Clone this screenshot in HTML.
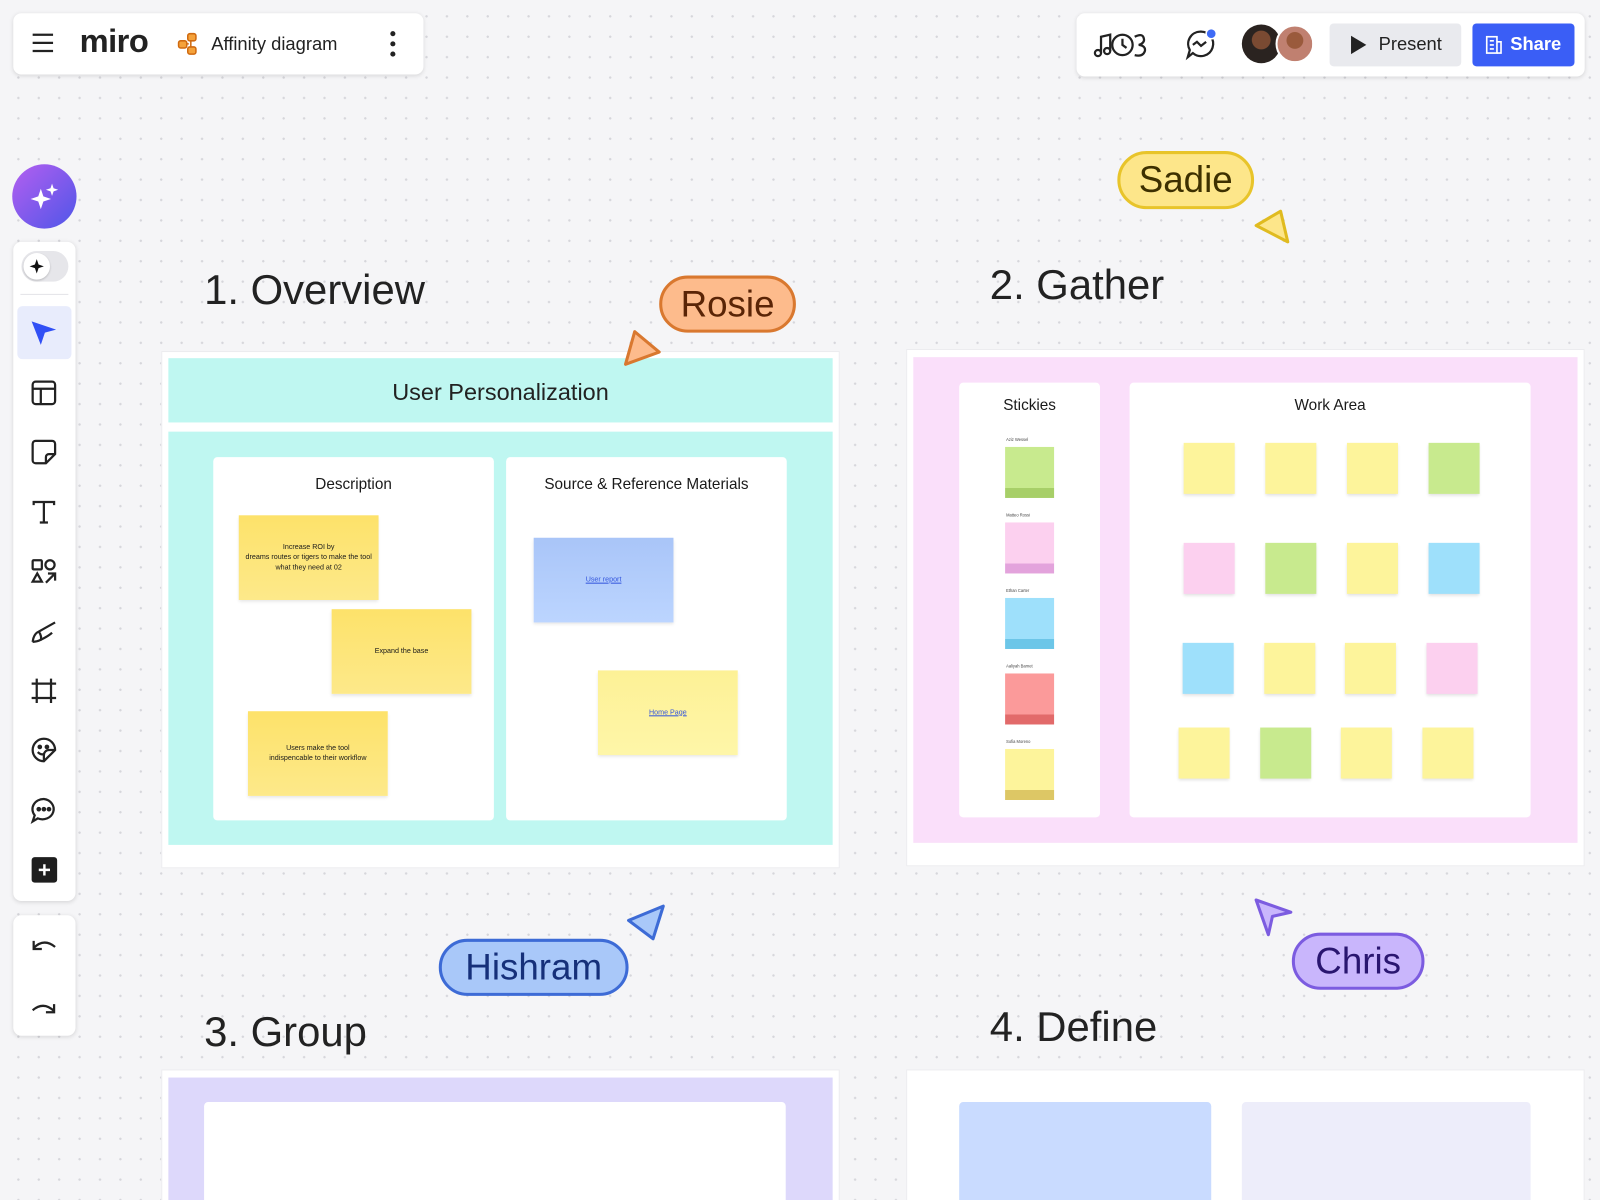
<!DOCTYPE html>
<html><head><meta charset="utf-8">
<style>
*{box-sizing:border-box;margin:0;padding:0}
html,body{width:1600px;height:1200px;overflow:hidden;background:#f5f5f7}
#w{position:absolute;left:0;top:0;width:1568px;height:1176px;transform:scale(1.020408);transform-origin:0 0;
background-color:#f5f5f7;background-image:radial-gradient(circle,#d6d6db 1px,transparent 1.3px);background-size:20px 20px;background-position:8px 6px;
font-family:"Liberation Sans","DejaVu Sans",sans-serif;color:#1a1a1a;overflow:hidden}
.a{position:absolute}
.panel{background:#fff;border-radius:8px;box-shadow:0 1px 4px rgba(0,0,0,.12)}
.t{font-size:41px;color:#222;font-family:"Liberation Sans",sans-serif;font-weight:normal}
.lab{position:absolute;border-radius:30px;border:3px solid;font-size:36px;text-align:center;font-family:"Liberation Sans",sans-serif}
.st{position:absolute;width:50px;height:50px;box-shadow:0 2px 3px rgba(0,0,0,.12)}
.Y{background:#fdf49b}.G{background:#c8ea8e}.P{background:#fcd0ef}.B{background:#9ee0fb}
.note{position:absolute;width:137px;height:83px;font-size:7px;text-align:center;display:flex;align-items:center;justify-content:center;line-height:10px;box-shadow:0 2px 3px rgba(0,0,0,.1)}
.ic{position:absolute;left:29px;width:28px;height:28px}
</style></head><body><div id="w">

<div class="a panel" style="left:13px;top:13px;width:402px;height:60px"></div>
<svg class="a" style="left:30px;top:31px" width="24" height="22"><path d="M2 3H22M2 11H22M2 19H22" stroke="#222" stroke-width="2.2"/></svg>
<div class="a" style="left:78px;top:22px;font-size:32px;font-weight:bold;letter-spacing:-0.5px;color:#222">miro</div>
<svg class="a" style="left:173px;top:31px" width="24" height="24"><rect x="11" y="2" width="8" height="7" rx="2" fill="#f5a23a" stroke="#d06a10" stroke-width="1.5"/><rect x="2" y="9" width="8" height="7" rx="2" fill="#f5a23a" stroke="#d06a10" stroke-width="1.5"/><rect x="11" y="15" width="8" height="7" rx="2" fill="#f5a23a" stroke="#d06a10" stroke-width="1.5"/><path d="M10 12H12M14 9V15" stroke="#d06a10" stroke-width="1.5"/></svg>
<div class="a" style="left:207px;top:33px;font-size:18px;color:#222">Affinity diagram</div>
<svg class="a" style="left:380px;top:30px" width="10" height="26"><circle cx="5" cy="3" r="2.5" fill="#222"/><circle cx="5" cy="13" r="2.5" fill="#222"/><circle cx="5" cy="23" r="2.5" fill="#222"/></svg>

<div class="a panel" style="left:1055px;top:13px;width:498px;height:62px"></div>
<svg class="a" style="left:1070px;top:28px" width="62" height="32" fill="none" stroke="#222" stroke-width="2.2"><circle cx="6" cy="24" r="3"/><circle cx="15" cy="22" r="3"/><path d="M9 24V8L18 6V22"/><circle cx="30" cy="16" r="10"/><path d="M30 10V16L34 19"/><path d="M42 8Q50 4 51 10Q52 14 46 16Q53 17 52 22Q50 28 42 26"/></svg>
<svg class="a" style="left:1160px;top:26px" width="34" height="34" fill="none" stroke="#222" stroke-width="2.2"><path d="M16 5A12 12 0 1 1 9 26L4 30L6 23A12 12 0 0 1 16 5Z"/><path d="M9 18L13 15L17 19L22 15"/><circle cx="27" cy="7" r="5" fill="#3f6bf6" stroke="#fff" stroke-width="1.5"/></svg>
<div class="a" style="left:1217px;top:24px;width:38px;height:38px;border-radius:50%;background:radial-gradient(circle at 50% 40%,#7a4a32 0 30%,#2a2320 32%)"></div>
<div class="a" style="left:1250px;top:24px;width:38px;height:38px;border-radius:50%;background:radial-gradient(circle at 50% 40%,#9a5a3c 0 30%,#c08070 32%);border:2px solid #fff"></div>
<div class="a" style="left:1303px;top:23px;width:129px;height:42px;border-radius:4px;background:#e9eaee"></div>
<svg class="a" style="left:1322px;top:34px" width="18" height="20"><path d="M2 1L17 10L2 19Z" fill="#222"/></svg>
<div class="a" style="left:1351px;top:33px;font-size:18px;color:#222">Present</div>
<div class="a" style="left:1443px;top:23px;width:100px;height:42px;border-radius:4px;background:#3a5ef6"></div>
<svg class="a" style="left:1455px;top:34px" width="18" height="20" fill="none" stroke="#fff" stroke-width="1.6"><rect x="2" y="2" width="10" height="16"/><path d="M12 7H16V18H12M5 6H9M5 10H9M5 14H9"/></svg>
<div class="a" style="left:1480px;top:33px;font-size:18px;color:#fff;font-weight:bold">Share</div>

<div class="a" style="left:12px;top:161px;width:63px;height:63px;border-radius:50%;background:linear-gradient(135deg,#b45ff0,#4f56e8)"></div>
<svg class="a" style="left:28px;top:177px" width="32" height="32" fill="#fff"><path d="M12 8L14.5 15.5L22 18L14.5 20.5L12 28L9.5 20.5L2 18L9.5 15.5Z"/><path d="M23 3L24.5 7.5L29 9L24.5 10.5L23 15L21.5 10.5L17 9L21.5 7.5Z"/></svg>
<div class="a panel" style="left:13px;top:237px;width:61px;height:646px"></div>
<div class="a" style="left:21px;top:246px;width:46px;height:30px;border-radius:15px;background:#e6e6ea"></div>
<div class="a" style="left:23px;top:248px;width:26px;height:26px;border-radius:50%;background:#fff;box-shadow:0 1px 2px rgba(0,0,0,.2)"></div>
<svg class="a" style="left:28px;top:253px" width="16" height="16"><path d="M8 1L9.8 6.2L15 8L9.8 9.8L8 15L6.2 9.8L1 8L6.2 6.2Z" fill="#111"/></svg>
<div class="a" style="left:20px;top:288px;width:47px;height:1px;background:#e4e4e8"></div>
<div class="a" style="left:17px;top:300px;width:53px;height:52px;border-radius:5px;background:#e8ecfc"></div>
<svg class="ic" style="top:312px" viewBox="0 0 28 28"><path d="M2 3L26 11L15 14L11 26Z" fill="#3150f5"/></svg>
<svg class="ic" style="top:371px" viewBox="0 0 28 28" fill="none" stroke="#222" stroke-width="2.2"><rect x="3" y="3" width="22" height="22" rx="3"/><path d="M3 10H25M11 10V25"/></svg>
<svg class="ic" style="top:429px" viewBox="0 0 28 28" fill="none" stroke="#222" stroke-width="2.2"><path d="M6 3H22A3 3 0 0 1 25 6V16L16 25H6A3 3 0 0 1 3 22V6A3 3 0 0 1 6 3Z"/><path d="M25 16H19A3 3 0 0 0 16 19V25"/></svg>
<svg class="ic" style="top:488px" viewBox="0 0 28 28" fill="none" stroke="#222" stroke-width="2.2"><path d="M4 7V4H24V7M14 4V24M10 24H18"/></svg>
<svg class="ic" style="top:546px" viewBox="0 0 28 28" fill="none" stroke="#222" stroke-width="2.2"><rect x="3" y="3" width="9" height="9" rx="1"/><circle cx="20" cy="7.5" r="4.5"/><path d="M7.5 16L12 24H3Z"/><path d="M16 25L25 16M18 16H25V23"/></svg>
<svg class="ic" style="top:604px" viewBox="0 0 28 28" fill="none" stroke="#222" stroke-width="2.2"><path d="M3 25Q4 17 9 15Q16 11 25 6"/><path d="M9 15Q12 19 11 23Q7 25 3 25"/><path d="M11 23Q19 19 22 16"/></svg>
<svg class="ic" style="top:663px" viewBox="0 0 28 28" fill="none" stroke="#222" stroke-width="2.2"><path d="M7 2V26M21 2V26M2 7H26M2 21H26"/></svg>
<svg class="ic" style="top:721px" viewBox="0 0 28 28" fill="none" stroke="#222" stroke-width="2.2"><path d="M25 14A11 11 0 1 0 14 25L25 14Z"/><path d="M25 14H19A5 5 0 0 0 14 19V25"/><circle cx="10" cy="11" r="1.2" fill="#222"/><circle cx="17" cy="11" r="1.2" fill="#222"/><path d="M8 16Q11 19 14 18"/></svg>
<svg class="ic" style="top:780px" viewBox="0 0 28 28" fill="none" stroke="#222" stroke-width="2.2"><path d="M14 3A11 10 0 1 1 8 22L3 25L5 19A11 10 0 0 1 14 3Z"/><circle cx="9" cy="13" r="1.2" fill="#222"/><circle cx="14" cy="13" r="1.2" fill="#222"/><circle cx="19" cy="13" r="1.2" fill="#222"/></svg>
<div class="a" style="left:31px;top:840px;width:25px;height:25px;border-radius:3px;background:#1e1e1e"></div>
<svg class="a" style="left:37px;top:846px" width="13" height="13"><path d="M6.5 1V12M1 6.5H12" stroke="#fff" stroke-width="2.4"/></svg>
<div class="a panel" style="left:13px;top:897px;width:61px;height:118px"></div>
<svg class="ic" style="top:913px" viewBox="0 0 28 28" fill="none" stroke="#222" stroke-width="2.2"><path d="M4 9V17H12"/><path d="M4 16Q14 6 25 15"/></svg>
<svg class="ic" style="top:972px" viewBox="0 0 28 28" fill="none" stroke="#222" stroke-width="2.2"><path d="M24 12V20H16"/><path d="M24 19Q14 9 3 18"/></svg>

<div class="a t" style="left:200px;top:261px">1. Overview</div>
<div class="a t" style="left:970px;top:256px">2. Gather</div>
<div class="a t" style="left:200px;top:988px">3. Group</div>
<div class="a t" style="left:970px;top:983px">4. Define</div>

<div class="a" style="left:158px;top:344px;width:665px;height:507px;background:#fff;border:1px solid #ececef"></div>
<div class="a" style="left:165px;top:351px;width:651px;height:63px;background:#bff7f1;font-size:23px;text-align:center;line-height:66px;color:#222">User Personalization</div>
<div class="a" style="left:165px;top:423px;width:651px;height:405px;background:#bff7f1"></div>
<div class="a" style="left:209px;top:448px;width:275px;height:356px;background:#fff;border-radius:4px;font-size:15px;text-align:center;padding-top:18px">Description</div>
<div class="a" style="left:496px;top:448px;width:275px;height:356px;background:#fff;border-radius:4px;font-size:15px;text-align:center;padding-top:18px">Source &amp; Reference Materials</div>
<div class="note" style="left:234px;top:505px;background:linear-gradient(#fde26a,#fde98a)">Increase ROI by<br>dreams routes or tigers to make the tool<br>what they need at 02</div>
<div class="note" style="left:325px;top:597px;background:linear-gradient(#fde26a,#fde98a)">Expand the base</div>
<div class="note" style="left:243px;top:697px;background:linear-gradient(#fde26a,#fde98a)">Users make the tool<br>indispencable to their workflow</div>
<div class="note" style="left:523px;top:527px;background:linear-gradient(#a9c5f8,#bcd5ff);color:#3355dd;text-decoration:underline">User report</div>
<div class="note" style="left:586px;top:657px;background:linear-gradient(#fdf196,#fef6a8);color:#3355dd;text-decoration:underline">Home Page</div>

<div class="a" style="left:888px;top:342px;width:665px;height:507px;background:#fff;border:1px solid #ececef"></div>
<div class="a" style="left:895px;top:350px;width:651px;height:476px;background:#fadffa"></div>
<div class="a" style="left:940px;top:375px;width:138px;height:426px;background:#fff;border-radius:4px;font-size:15px;text-align:center;padding-top:14px">Stickies</div>
<div class="a" style="left:1107px;top:375px;width:393px;height:426px;background:#fff;border-radius:4px;font-size:15px;text-align:center;padding-top:14px">Work Area</div>
<div class="a" style="left:985px;top:438px;width:48px;height:50px;background:linear-gradient(#c8ea8e 80%,#a7cf68 80%)"></div>
<div class="a" style="left:985px;top:512px;width:48px;height:50px;background:linear-gradient(#fcd0ef 80%,#e3a3dc 80%)"></div>
<div class="a" style="left:985px;top:586px;width:48px;height:50px;background:linear-gradient(#9ee0fb 80%,#6cc6e8 80%)"></div>
<div class="a" style="left:985px;top:660px;width:48px;height:50px;background:linear-gradient(#fb9a9a 80%,#e26a6a 80%)"></div>
<div class="a" style="left:985px;top:734px;width:48px;height:50px;background:linear-gradient(#fdf49b 80%,#ddc765 80%)"></div>
<div class="a" style="left:986px;top:428px;font-size:4px;color:#444">Aziz Wessel</div>
<div class="a" style="left:986px;top:502px;font-size:4px;color:#444">Matteo Rossi</div>
<div class="a" style="left:986px;top:576px;font-size:4px;color:#444">Ethan Carter</div>
<div class="a" style="left:986px;top:650px;font-size:4px;color:#444">Aaliyah Barnet</div>
<div class="a" style="left:986px;top:724px;font-size:4px;color:#444">Sofia Moreno</div>

<div class="st Y" style="left:1160px;top:434px"></div><div class="st Y" style="left:1240px;top:434px"></div><div class="st Y" style="left:1320px;top:434px"></div><div class="st G" style="left:1400px;top:434px"></div>
<div class="st P" style="left:1160px;top:532px"></div><div class="st G" style="left:1240px;top:532px"></div><div class="st Y" style="left:1320px;top:532px"></div><div class="st B" style="left:1400px;top:532px"></div>
<div class="st B" style="left:1159px;top:630px"></div><div class="st Y" style="left:1239px;top:630px"></div><div class="st Y" style="left:1318px;top:630px"></div><div class="st P" style="left:1398px;top:630px"></div>
<div class="st Y" style="left:1155px;top:713px"></div><div class="st G" style="left:1235px;top:713px"></div><div class="st Y" style="left:1314px;top:713px"></div><div class="st Y" style="left:1394px;top:713px"></div>

<div class="a" style="left:158px;top:1048px;width:665px;height:140px;background:#fff;border:1px solid #ececef"></div>
<div class="a" style="left:165px;top:1056px;width:651px;height:130px;background:#ddd8fb"></div>
<div class="a" style="left:200px;top:1080px;width:570px;height:110px;background:#fff;border-radius:4px"></div>
<div class="a" style="left:888px;top:1048px;width:665px;height:140px;background:#fff;border:1px solid #ececef"></div>
<div class="a" style="left:940px;top:1080px;width:247px;height:110px;background:#c9dbff;border-radius:4px"></div>
<div class="a" style="left:1217px;top:1080px;width:283px;height:110px;background:#ededfa;border-radius:4px"></div>

<div class="lab" style="left:1095px;top:148px;width:134px;height:57px;background:#fde68a;border-color:#e8c42a;color:#3d3000;line-height:50px">Sadie</div>
<svg class="a" style="left:1228px;top:203px" width="40" height="36"><path d="M27 4L34 34L3 18Z" fill="#fde68a" stroke="#e0bb20" stroke-width="3" stroke-linejoin="round"/></svg>
<div class="lab" style="left:646px;top:270px;width:134px;height:56px;background:#fdbb8c;border-color:#d9782f;color:#5a2406;line-height:50px">Rosie</div>
<svg class="a" style="left:608px;top:320px" width="42" height="40"><path d="M14 5L38 25L5 37Z" fill="#fdbb8c" stroke="#d9782f" stroke-width="3" stroke-linejoin="round"/></svg>
<div class="lab" style="left:430px;top:920px;width:186px;height:56px;background:#a9c8f9;border-color:#3d6bd6;color:#16307a;line-height:50px">Hishram</div>
<svg class="a" style="left:612px;top:884px" width="42" height="40"><path d="M38 4L28 36L4 18Z" fill="#a9c8f9" stroke="#3d6bd6" stroke-width="3" stroke-linejoin="round"/></svg>
<div class="lab" style="left:1266px;top:914px;width:130px;height:56px;background:#c9b6fc;border-color:#7c5ce0;color:#2a1670;line-height:50px">Chris</div>
<svg class="a" style="left:1227px;top:878px" width="42" height="42"><path d="M4 4L38 16L20 20L16 38Z" fill="#c9b6fc" stroke="#7c5ce0" stroke-width="3" stroke-linejoin="round"/></svg>

</div></body></html>
